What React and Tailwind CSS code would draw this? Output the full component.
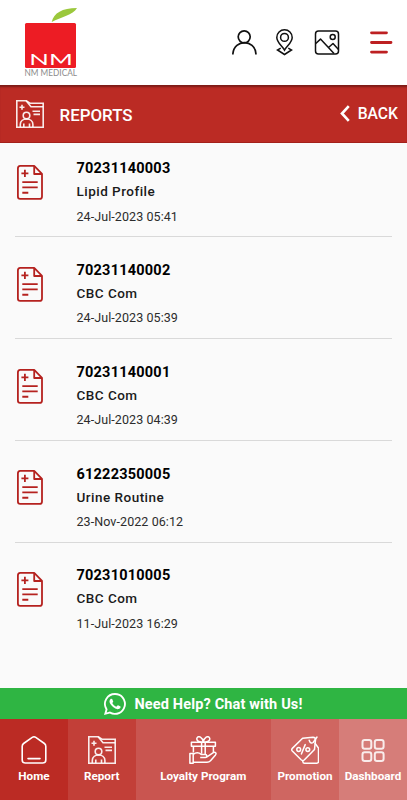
import React from "react";

const reports = [
  { id: "70231140003", name: "Lipid Profile", date: "24-Jul-2023 05:41" },
  { id: "70231140002", name: "CBC Com", date: "24-Jul-2023 05:39" },
  { id: "70231140001", name: "CBC Com", date: "24-Jul-2023 04:39" },
  { id: "61222350005", name: "Urine Routine", date: "23-Nov-2022 06:12" },
  { id: "70231010005", name: "CBC Com", date: "11-Jul-2023 16:29" },
];

function Logo() {
  return (
    <svg className="ml-[22px] mt-[6px] h-[72px] w-[58px] shrink-0" viewBox="22 6 58 72">
      <path d="M51.7 22C54 13 62 8 77 8C73 15 61 17 51.7 22Z" fill="#9bc83c" />
      <rect x="25" y="23" width="51" height="45" rx="1.5" fill="#ed1c24" />
      <text x="29.3" y="64.5" textLength="43.5" lengthAdjust="spacingAndGlyphs" fontFamily="Lato, sans-serif" fontSize="15" fill="#fff">NM</text>
      <text x="24.5" y="75.7" textLength="52.5" lengthAdjust="spacingAndGlyphs" fontFamily="Lato, sans-serif" fontSize="8.6" fill="#8c8c8c">NM MEDICAL</text>
    </svg>
  );
}

function FolderIcon({ className }) {
  return (
    <svg className={className} viewBox="0 0 28 28" fill="none" stroke="currentColor" strokeOpacity=".9" strokeWidth="1.6">
      <path d="M.8 27.2V.8h9.4l3.8 2.4H27.2v24z" />
      <path d="M10.2.8l4.8 5.900h12.200M6 4.800v5M3.500 7.300h5M16.500 11.200H24M17.500 14.400H24" />
      <circle cx="10.500" cy="15.600" r="3.300" />
      <path d="M4.300 27v-2.500c0-7.400 12.600-7.400 12.600 0V27M7.800 27v-3.500M13.500 27v-3.500" />
    </svg>
  );
}

function DocIcon() {
  return (
    <svg className="mt-[29.500px] h-[35px] w-[26px] shrink-0" viewBox="0 0 26 34" preserveAspectRatio="none" fill="none" stroke="#b5221f" strokeWidth="1.800" strokeLinejoin="round">
      <path d="M3.200.9h14L25 8.700v21.800a2.400 2.400 0 0 1-2.400 2.400H3.200A2.400 2.400 0 0 1 .9 30.500V3.300A2.400 2.400 0 0 1 3.200.9z" />
      <path d="M17.200.9v7.800H25M7.900 4.700v7M4.400 8.200h7M5.300 16.600h15.400M5.300 21.800h15.400M5.300 27h6" />
    </svg>
  );
}

function HomeIcon() {
  return (
    <svg className="h-7 w-7" viewBox="0 0 28 28" fill="none" stroke="#fff" strokeWidth="1.600" strokeLinejoin="round" strokeLinecap="round">
      <path d="M12.600 1.200q1.400-.8 2.800 0l9 6.300q1.400 1 1.400 2.700V24q0 3-3 3H5.200q-3 0-3-3V10.200q0-1.700 1.400-2.700zM8 22.600h12" />
    </svg>
  );
}

function GiftIcon() {
  return (
    <svg className="h-7 w-7" viewBox="0 0 28 28" fill="none" stroke="#fff" strokeWidth="1.500" strokeLinejoin="round">
      <path d="M2.400 6.200h24v4h-24zM4.400 10.200v6.300M24.400 10.200v6M12.600 6.200v11.500M16.200 6.200v12M14.300 5.800C10 6.500 7 4.500 8 2c1.500-3 5.500-.5 6.300 3.800zM14.300 5.800C18.600 6.500 21.600 4.500 20.600 2c-1.500-3-5.500-.5-6.300 3.800z" />
      <path d="M.9 17.500h3.300v9.700H.9zM4.200 18.300c3-2.200 5.600-2 8 .1h4c2 0 2.400 2.900.2 3.200h-5.200M18 20.800l6.300-4.200c2-1.200 3.500.6 2.200 2.300l-5 5.800c-1.200 1.300-2 1.500-3.500 1.500H4.200" />
    </svg>
  );
}

function PromoIcon() {
  return (
    <svg className="h-7 w-7" viewBox="0 0 28 28" fill="none" stroke="#fff" strokeWidth="1.500" strokeLinejoin="round" strokeLinecap="round">
      <path d="M1.300 12.400L11.600 2.200 22 1.300q2.500 0 2.500 2.500l-1 9.600L13.200 24q-1.400 1.200-2.800 0L1.300 15q-1.200-1.300 0-2.600z" />
      <path d="M11.800 25.200v.3q0 1.700 1.700 1.700H25.800q1.700 0 1.700-1.700V12L24.200 7.500M18.200 4.300q1.300 4 4 2.200L26 1M14.200 8.600L10.400 18" />
      <circle cx="7.700" cy="13.500" r="1.900" />
      <circle cx="16.800" cy="13.600" r="1.900" />
    </svg>
  );
}

function GridIcon() {
  return (
    <svg className="mt-[2px] h-[26px] w-7" viewBox="0 1 28 26" fill="none" stroke="#fff" strokeOpacity=".85" strokeWidth="2">
      <rect x="3.500" y="3" width="8.800" height="8.800" rx="2.200" />
      <rect x="15.800" y="3" width="8.800" height="8.800" rx="2.200" />
      <rect x="3.500" y="15.200" width="8.800" height="8.800" rx="2.200" />
      <rect x="15.800" y="15.200" width="8.800" height="8.800" rx="2.200" />
    </svg>
  );
}

function NavItem({ className, label, children }) {
  return (
    <a className={`flex flex-col items-center pt-[17px] ${className}`}>
      {children}
      <span className="mt-[4px] whitespace-nowrap text-[11.700px] leading-4 font-bold">{label}</span>
    </a>
  );
}

export default function App() {
  return (
    <div className="flex h-[800px] w-[407px] flex-col overflow-hidden bg-[#fafafa] font-['Roboto',sans-serif] text-black">
      <header className="flex h-[85px] shrink-0 bg-white">
        <Logo />
        <div className="ml-auto mr-[14px] flex pt-[28px]">
          <svg className="mr-[18px] h-7 w-[26px]" viewBox="0 0 26 28" fill="none" stroke="#111" strokeWidth="1.700">
            <circle cx="12.200" cy="8.800" r="6" />
            <path d="M.9 26.600v-1C2.300 11 22.700 11 23.900 25.600v1" />
          </svg>
          <svg className="mr-[20px] h-7 w-[18px]" viewBox="0 0 18 28" fill="none" stroke="#111" strokeWidth="1.500">
            <path d="M8.500 22.200C6 17.600.8 14.500.8 9.500a7.700 7.700 0 0 1 15.400 0c0 5-5.200 8.100-7.700 12.700z" />
            <circle cx="8.500" cy="9.400" r="3.900" />
            <path d="M4.700 20.200L1.500 22l7 4.500L15.500 22l-3.200-1.800" />
          </svg>
          <svg className="mr-[29px] h-7 w-[26px]" viewBox="0 0 26 28" fill="none" stroke="#111" strokeWidth="1.500" strokeLinejoin="round">
            <rect x="1.500" y="2.900" width="23" height="23" rx="3" />
            <circle cx="18.700" cy="8.900" r="2.500" />
            <path d="M1.500 15.700l5-4.600L20 25.500M14.500 19.500l4.500-4 5.500 6" />
          </svg>
          <svg className="h-7 w-[24px]" viewBox="0 0 24 28" fill="none" stroke="#bd2022" strokeWidth="2.800" strokeLinecap="round">
            <path d="M2.500 4.800H17.500M2.500 14.500H22M2.500 24.100H17.500" />
          </svg>
        </div>
      </header>

      <div className="flex h-[58px] shrink-0 items-center border-b border-[#a3201a] bg-[#bb2b24] pl-[15.500px] pr-[9px] text-white shadow-[inset_0_3px_2px_-1px_#7c1c18]">
        <FolderIcon className="h-7 w-7" />
        <h1 className="ml-[16px] mt-[3px] text-[16.900px] leading-5 font-medium">REPORTS</h1>
        <svg className="ml-auto mr-[8px] h-[17px] w-[10px]" viewBox="0 0 10 18" fill="none" stroke="#fff" strokeWidth="2.800">
          <path d="M9 1.200L1.800 9 9 16.800" />
        </svg>
        <span className="mt-[1px] text-[15.700px] leading-5 font-medium">BACK</span>
      </div>

      <main className="min-h-0 flex-1 overflow-hidden">
        <ul className="-mt-[7.600px]">
          {reports.map((r) => (
            <li key={r.id} className="ml-[15px] mr-[15px] flex h-[101.850px] border-b border-[#d9d9d9] pl-[2px] last:border-transparent">
              <DocIcon />
              <div className="ml-[33.500px] pt-[21.600px]">
                <div className="text-[14.500px] leading-6 font-bold tracking-[0.220px]">{r.id}</div>
                <div className="-mt-px text-[13.500px] leading-[23px] font-medium tracking-[0.480px] text-[#1b1b1b]">{r.name}</div>
                <div className="mt-[0.600px] text-[12.500px] leading-[25px] tracking-[0.080px] text-[#2c2c2c]">{r.date}</div>
              </div>
            </li>
          ))}
        </ul>
      </main>

      <div className="flex h-[31px] shrink-0 items-center justify-center gap-[8px] bg-[#2fb543] text-white">
        <svg className="h-[22px] w-[22px]" viewBox="0 0 24 24" fill="#fff">
          <path d="M17.472 14.382c-.297-.149-1.758-.867-2.030-.967-.273-.099-.471-.148-.67.150-.197.297-.767.966-.940 1.164-.173.199-.347.223-.644.075-.297-.150-1.255-.463-2.390-1.475-.883-.788-1.480-1.761-1.653-2.059-.173-.297-.018-.458.130-.606.134-.133.298-.347.446-.520.149-.174.198-.298.298-.497.099-.198.050-.371-.025-.520-.075-.149-.669-1.612-.916-2.207-.242-.579-.487-.500-.669-.510-.173-.008-.371-.010-.570-.010-.198 0-.520.074-.792.372-.272.297-1.040 1.016-1.040 2.479 0 1.462 1.065 2.875 1.213 3.074.149.198 2.096 3.200 5.077 4.487.709.306 1.262.489 1.694.625.712.227 1.360.195 1.871.118.571-.085 1.758-.719 2.006-1.413.248-.694.248-1.289.173-1.413-.074-.124-.272-.198-.570-.347z" />
          <path fillRule="evenodd" d="M12 0A11.900 11.900 0 0 0 1.700 17.900L0 24l6.300-1.650A11.900 11.900 0 1 0 12 0zm0 2.050a9.850 9.850 0 1 1-5 18.350l-.4-.2-3.700 1 1-3.600-.3-.4A9.850 9.850 0 0 1 12 2.050z" />
        </svg>
        <span className="mt-[2px] text-[14.500px] leading-5 font-bold tracking-[0.150px]">Need Help? Chat with Us!</span>
      </div>

      <nav className="grid h-[81px] shrink-0 grid-cols-[68px_67.500px_135.500px_68px_68px] text-white">
        <NavItem className="bg-[#bb2b24]" label="Home"><HomeIcon /></NavItem>
        <NavItem className="bg-[#c23f38]" label="Report"><FolderIcon className="h-7 w-7" /></NavItem>
        <NavItem className="bg-[#c95550]" label="Loyalty Program"><GiftIcon /></NavItem>
        <NavItem className="bg-[#cf6661]" label="Promotion"><PromoIcon /></NavItem>
        <NavItem className="bg-[#d67d79]" label="Dashboard"><GridIcon /></NavItem>
      </nav>
    </div>
  );
}
